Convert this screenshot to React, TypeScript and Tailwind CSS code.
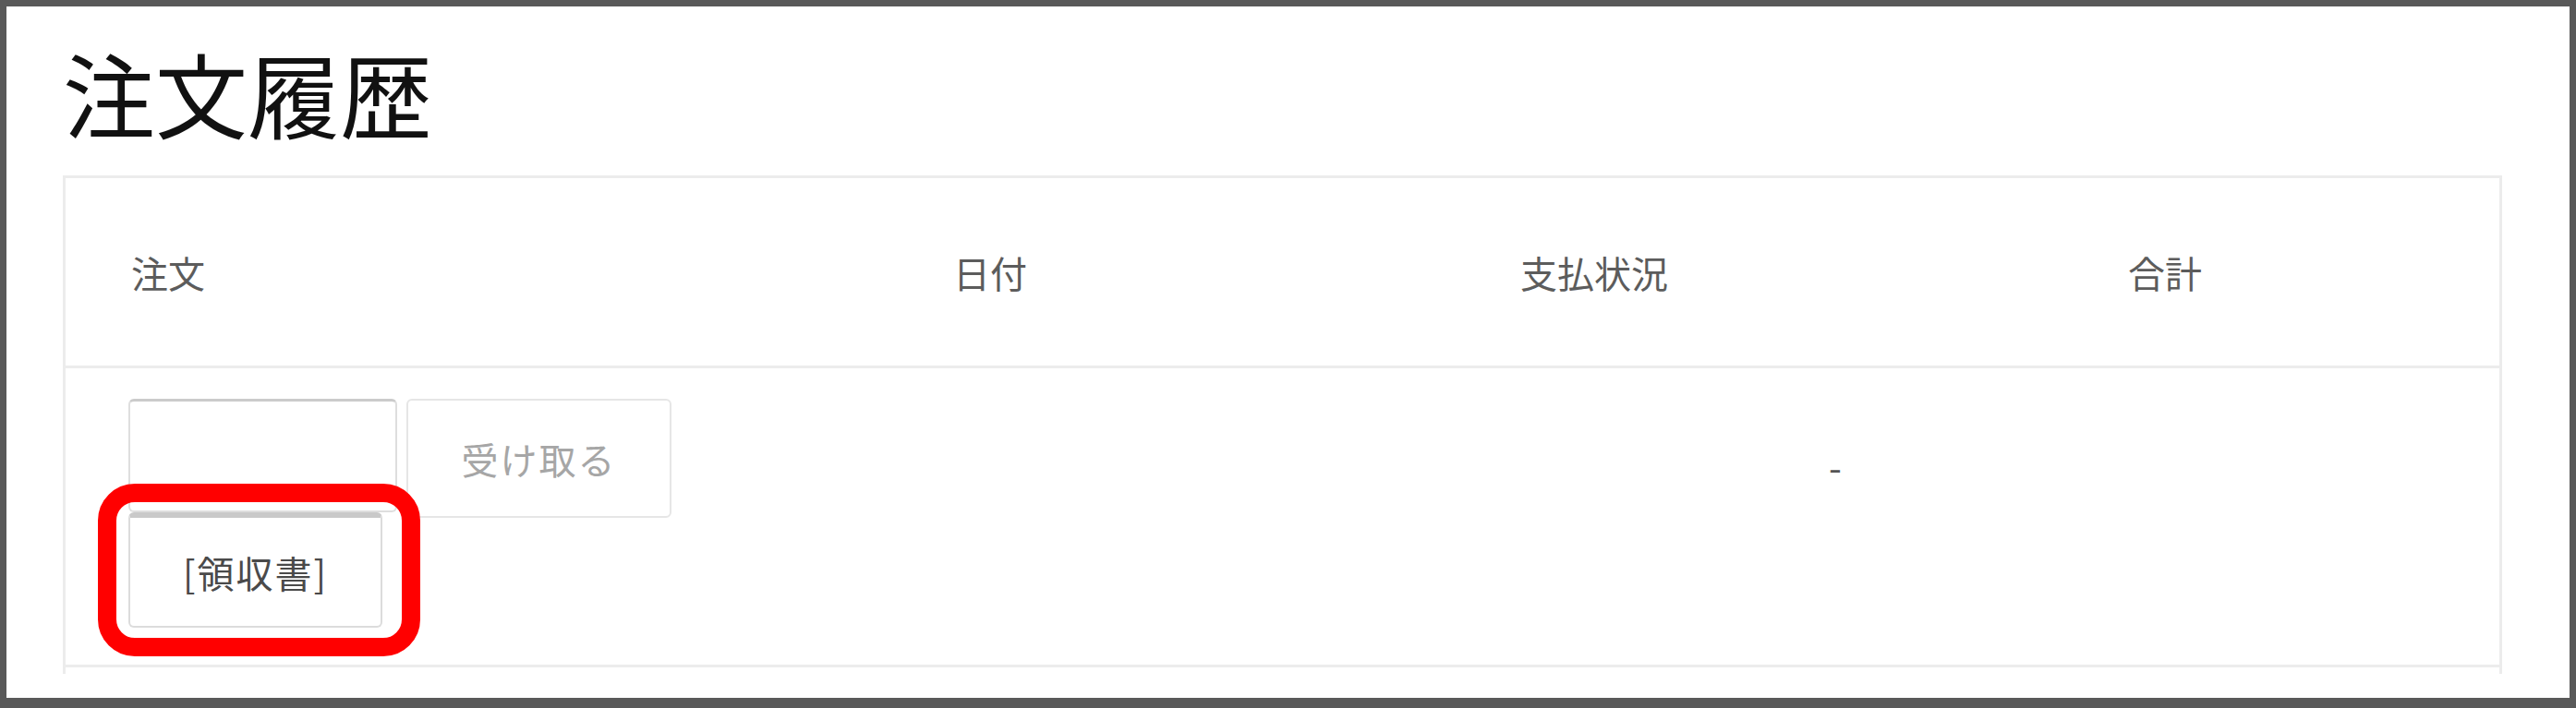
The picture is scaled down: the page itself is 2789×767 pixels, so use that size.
import React from "react";

const font = { fontFamily: '"Noto Sans CJK JP", "Noto Sans", sans-serif' };

export default function App() {
    return (
        <div className="w-[2789px] h-[767px] bg-[#595959] pt-[7px] px-[7px] pb-[11px] flex flex-col" style={font}>
            <div className="flex-1 bg-white overflow-hidden pl-[61px] pt-[43px]">
                {/* Title */}
                <h1 className="text-[100px] leading-[100px] text-[#111]">注文履歴</h1>

                {/* Orders table */}
                <div className="mt-[40px] w-[2641px] border-x-[3px] border-t-[3px] border-[#ececec]">
                    <div className="grid grid-cols-[887px_614px_658px_1fr] h-[206px] items-center border-b-[3px] border-[#ececec] text-[40px] leading-none text-[#5c5c5c]">
                        <div className="pl-[71px]">注文</div>
                        <div className="pl-[74px]">日付</div>
                        <div className="pl-[74px]">支払状況</div>
                        <div className="pl-[74px]">合計</div>
                    </div>

                    <div className="grid grid-cols-[887px_614px_658px_1fr] h-[324px] border-b-[3px] border-[#ececec]">
                        <div className="pl-[68px] pt-[33px]">
                            <div className="flex gap-[10px]">
                                <button className="w-[291px] h-[123px] rounded-[6px] border-2 border-t-[3px] border-[#dedede] border-t-[#cbcbcb] bg-white" />
                                <button className="w-[287px] h-[129px] rounded-[6px] border-2 border-[#e6e6e6] bg-white text-[40px] leading-none tracking-[2px] text-[#a6a6a6]">
                                    受け取る
                                </button>
                            </div>
                            <div className="relative w-[275px] -mt-[6px]">
                                <button className="w-[275px] h-[125px] rounded-[6px] border-2 border-t-[6px] border-[#dcdcdc] border-t-[#c9c9c9] bg-white text-[40px] leading-none tracking-[2px] text-[#4a4a4a]">
                                    [領収書]
                                </button>
                                <span className="absolute -left-[33px] -top-[31px] -right-[41px] -bottom-[31px] border-[20px] border-[#ff0000] rounded-[40px] pointer-events-none" />
                            </div>
                        </div>
                        <div />
                        <div className="pl-[408px] pt-[86px] text-[40px] leading-none text-[#555]">-</div>
                        <div />
                    </div>
                    <div className="h-[7px]" />
                </div>
            </div>
        </div>
    );
}
